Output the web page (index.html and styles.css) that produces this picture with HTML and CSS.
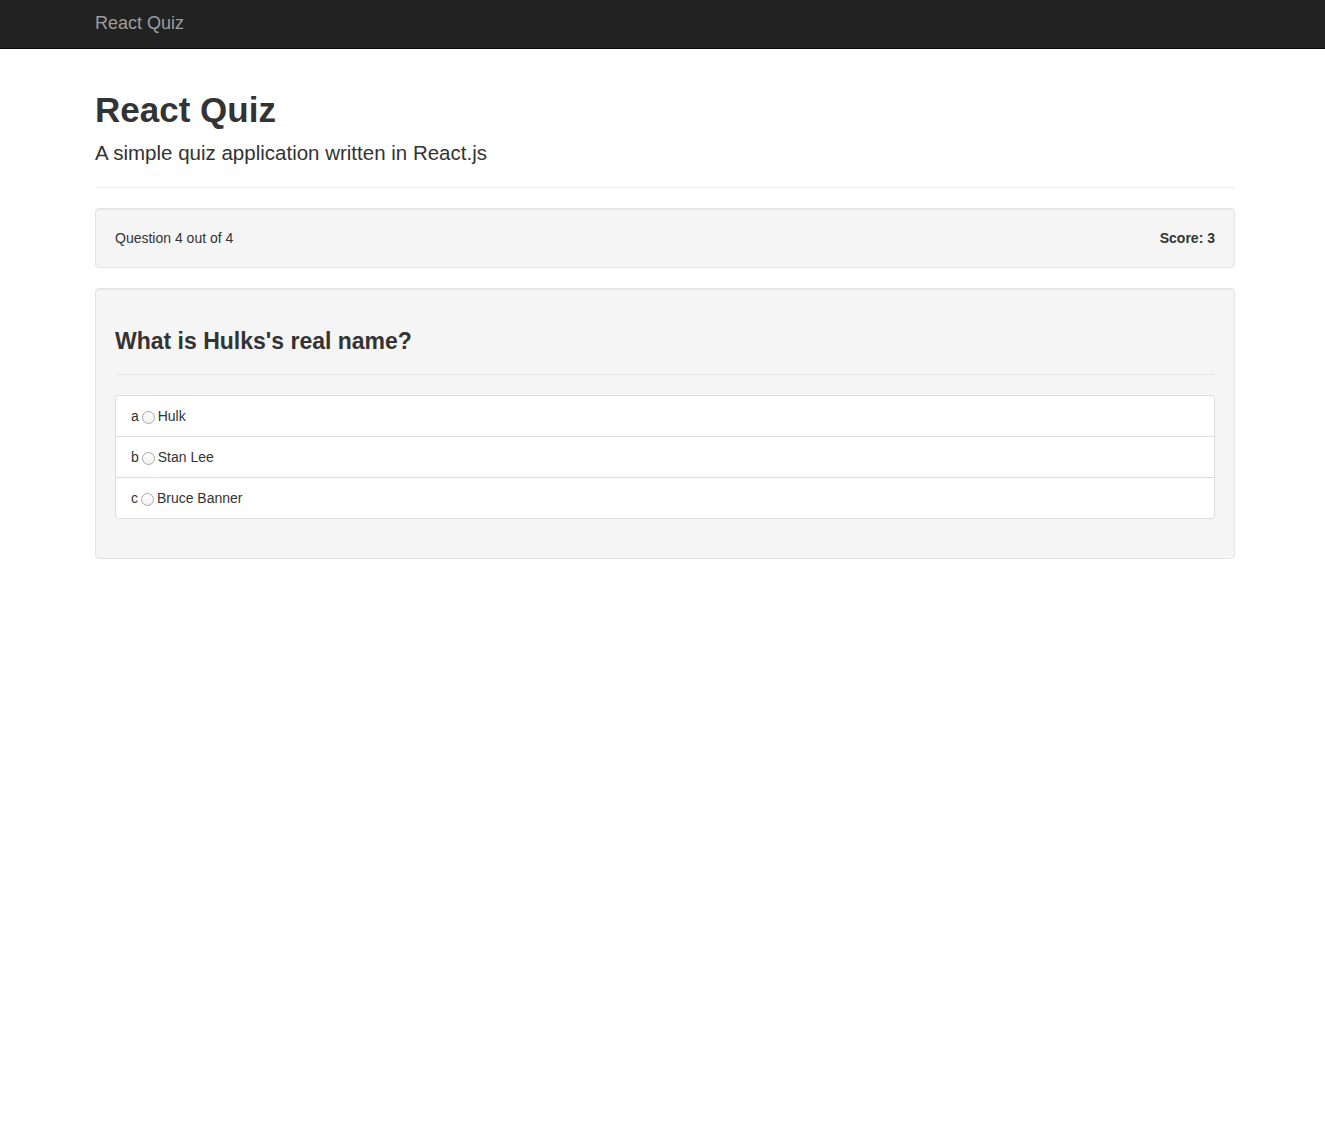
FILE: index.html
```html
<!DOCTYPE html>
<html lang="en">
<head>
    <meta charset="UTF-8">
    <meta name="viewport" content="width=device-width, initial-scale=1.0">
    <title>React Quiz</title>
    <link rel="stylesheet" href="styles.css">
</head>
<body>

    <nav class="navbar">
        <div class="container">
            <a class="navbar-brand" href="#">React Quiz</a>
        </div>
    </nav>

    <div class="container">
        <div class="page-header">
            <h1>React Quiz</h1>
            <p class="lead">A simple quiz application written in React.js</p>
        </div>

        <!-- Progress and score -->
        <div class="well status">
            <span>Question 4 out of 4</span>
            <strong>Score: 3</strong>
        </div>

        <!-- Current question -->
        <div class="well">
            <div class="question-header">
                <h3>What is Hulks's real name?</h3>
            </div>
            <ul class="list-group">
                <li class="list-group-item">
                    <label>a <input type="radio" name="answer" value="a">Hulk</label>
                </li>
                <li class="list-group-item">
                    <label>b <input type="radio" name="answer" value="b">Stan Lee</label>
                </li>
                <li class="list-group-item">
                    <label>c <input type="radio" name="answer" value="c">Bruce Banner</label>
                </li>
            </ul>
        </div>
    </div>

</body>
</html>
```

FILE: styles.css
```css
* {
    box-sizing: border-box;
}

body {
    margin: 0;
    font-family: 'Liberation Sans', Arial, sans-serif;
    font-size: 14px;
    line-height: 20px;
    color: #333;
    background-color: #fff;
}

.container {
    max-width: 1170px;
    margin: 0 auto;
    padding: 0 12.5px 0 17.5px;
}

/* Top bar */
.navbar {
    height: 49px;
    background-color: #222;
    border-bottom: 1px solid #080808;
}

.navbar-brand {
    display: inline-block;
    padding: 13px 0;
    font-size: 18px;
    line-height: 20px;
    color: #9d9d9d;
    text-decoration: none;
}

/* Header */
.page-header {
    border-bottom: 1px solid #eee;
    margin-bottom: 20px;
}

h1 {
    font-size: 35px;
    font-weight: bold;
    line-height: 40px;
    margin: 41px 0 8px;
}

.lead {
    font-size: 20.5px;
    line-height: 29px;
    font-weight: 300;
    margin: 0 0 20px;
}

/* Wells */
.well {
    background-color: #f5f5f5;
    border: 1px solid #e3e3e3;
    border-radius: 4px;
    box-shadow: inset 0 1px 1px rgba(0, 0, 0, 0.05);
    padding: 19px;
    margin-bottom: 20px;
}

.status {
    display: flex;
    justify-content: space-between;
}

.question-header {
    border-bottom: 1px solid #e6e6e6;
    padding-bottom: 9px;
    margin-bottom: 20px;
}

h3 {
    font-size: 23px;
    font-weight: bold;
    line-height: 27px;
    margin: 20px 0 10px;
}

/* Answers */
.list-group {
    list-style: none;
    margin: 0 0 20px;
    padding: 0;
}

.list-group-item {
    background-color: #fff;
    border: 1px solid #ddd;
    padding: 10px 15px;
    margin-bottom: -1px;
}

.list-group-item:first-child {
    border-radius: 4px 4px 0 0;
}

.list-group-item:last-child {
    border-radius: 0 0 4px 4px;
    margin-bottom: 0;
}

.list-group-item label {
    display: block;
}

input[type="radio"] {
    appearance: none;
    -webkit-appearance: none;
    width: 13px;
    height: 13px;
    margin: 0 3px 0 -1px;
    vertical-align: -3px;
    border: 1px solid #a9a9a9;
    border-radius: 50%;
    background: linear-gradient(#fff, #f2f2f2);
}

input[type="radio"]:checked {
    background: radial-gradient(#333 30%, #fff 40%);
}
```
